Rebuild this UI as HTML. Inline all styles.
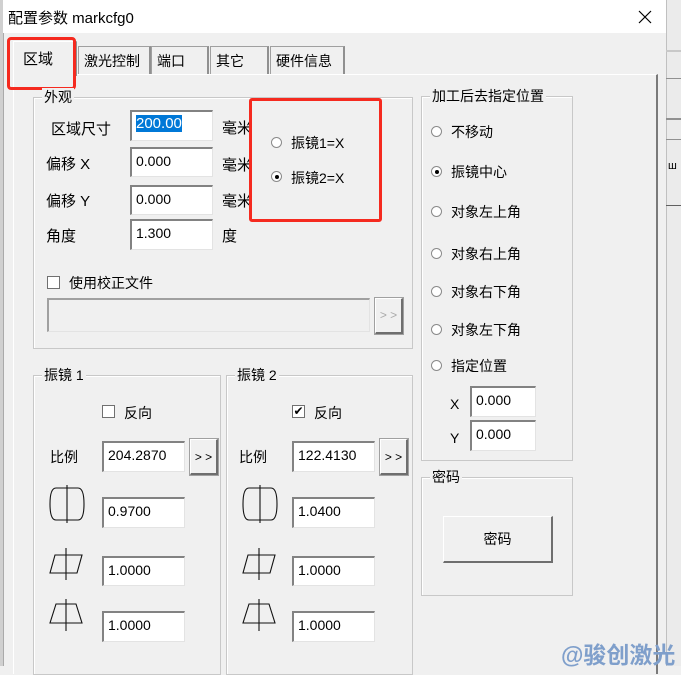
<!DOCTYPE html>
<html><head><meta charset="utf-8"><style>
*{margin:0;padding:0;box-sizing:border-box}
body{width:681px;height:666px;overflow:hidden;background:#f0f0f0;font-family:"Liberation Sans","Noto Sans CJK SC",sans-serif;font-size:14px;color:#000;position:relative}
.a{position:absolute;white-space:nowrap}
.in{position:absolute;background:#fff;border-top:2px solid #828282;border-left:2px solid #828282;border-right:1px solid #e3e3e3;border-bottom:1px solid #e3e3e3;padding:1px 0 0 4px;font-size:14px;line-height:22px}
.grp{position:absolute;border:1px solid #c8c8c8;box-shadow:inset 1px 1px 0 #fff}
.lg{position:absolute;background:#f0f0f0;padding:0 2px;top:-10px;left:8px;line-height:18px}
.btn{position:absolute;background:#f0f0f0;border:1px solid #fff;border-right:2px solid #6e6e6e;border-bottom:2px solid #6e6e6e;outline:1px solid #a0a0a0;text-align:center;font-size:12px}
.rad{position:absolute;width:11px;height:11px;border-radius:50%;border:1px solid #8a8a8a;background:#fff}
.rad.on::after{content:"";position:absolute;left:3px;top:3px;width:4px;height:4px;border-radius:50%;background:#000}
.chk{position:absolute;width:13px;height:13px;border:1px solid #707070;background:#fff;font-size:12px;line-height:11px;text-align:center}
.tab{position:absolute;top:46px;height:28px;border:1px solid #a0a0a0;border-bottom:none;border-right:2px solid #909090;padding:4px 5px;font-size:14px;background:#f0f0f0}
</style></head><body>
<div class="a" style="left:0;top:0;width:3px;height:666px;background:#d0d0d0"></div>
<div class="a" style="left:666px;top:0;width:15px;height:666px;background:#ebebeb;border-left:1px solid #c0c0c0"></div>
<div class="a" style="left:666px;top:50px;width:15px;height:2px;background:#c8c8c8"></div>
<div class="a" style="left:666px;top:78px;width:15px;height:1px;background:#909090"></div>
<div class="a" style="left:666px;top:118px;width:15px;height:2px;background:#909090"></div>
<div class="a" style="left:666px;top:139px;width:15px;height:1px;background:#909090"></div>
<div class="a" style="left:668px;top:160px;font-size:11px">ш</div>
<div class="a" style="left:666px;top:205px;width:15px;height:1px;background:#606060"></div>
<!-- dialog -->
<div class="a" style="left:3px;top:0;width:663px;height:666px;background:#f0f0f0;border-left:1px solid #aaa"></div>
<div class="a" style="left:3px;top:0;width:663px;height:33px;background:#fff"></div>
<div class="a" style="left:8px;top:7px;font-size:15px">配置参数 markcfg0</div>
<svg class="a" style="left:638px;top:10px" width="14" height="14" stroke="#000" stroke-width="1.2"><path d="M1 1L13 13M13 1L1 13"/></svg>
<!-- tab panel -->
<div class="a" style="left:13px;top:74px;width:645px;height:600px;border-top:1px solid #fff;border-left:1px solid #fff;border-right:2px solid #7a7a7a"></div>
<div class="tab" style="left:78px;width:73px">激光控制</div>
<div class="tab" style="left:151px;width:58px">端口</div>
<div class="tab" style="left:210px;width:59px">其它</div>
<div class="tab" style="left:270px;width:75px">硬件信息</div>
<div class="tab" style="left:13px;top:41px;height:35px;width:64px;border-left:1px solid #fff;border-top:1px solid #fff;padding:6px 9px;font-size:15px">区域</div>
<div class="a" style="left:7px;top:37px;width:69px;height:53px;border:3px solid #f52a1f;border-radius:4px"></div>
<!-- 外观 -->
<div class="grp" style="left:33px;top:97px;width:380px;height:252px"><div class="lg">外观</div></div>
<div class="a" style="left:51px;top:118px;font-size:15px">区域尺寸</div>
<div class="a" style="left:46px;top:153px;font-size:15px">偏移 X</div>
<div class="a" style="left:46px;top:190px;font-size:15px">偏移 Y</div>
<div class="a" style="left:46px;top:225px;font-size:15px">角度</div>
<div class="in" style="left:130px;top:110px;width:83px;height:31px;font-size:15px"><span style="background:#0078d7;color:#fff">200.00</span></div>
<div class="in" style="left:130px;top:147px;width:83px;height:30px">0.000</div>
<div class="in" style="left:130px;top:185px;width:83px;height:30px">0.000</div>
<div class="in" style="left:130px;top:219px;width:83px;height:31px">1.300</div>
<div class="a" style="left:222px;top:117px;font-size:15px">毫米</div>
<div class="a" style="left:222px;top:154px;font-size:15px">毫米</div>
<div class="a" style="left:222px;top:190px;font-size:15px">毫米</div>
<div class="a" style="left:222px;top:225px;font-size:15px">度</div>
<div class="a" style="left:249px;top:98px;width:133px;height:124px;border:3px solid #f52a1f;border-radius:3px;background:#f0f0f0"></div>
<div class="rad" style="left:271px;top:137px"></div><div class="a" style="left:291px;top:133px">振镜1=X</div>
<div class="rad on" style="left:271px;top:171px"></div><div class="a" style="left:291px;top:168px">振镜2=X</div>
<div class="chk" style="left:47px;top:276px"></div><div class="a" style="left:69px;top:273px">使用校正文件</div>
<div class="a" style="left:47px;top:298px;width:323px;height:34px;border-top:2px solid #a0a0a0;border-left:2px solid #a0a0a0;border-right:1px solid #e3e3e3;border-bottom:1px solid #e3e3e3"></div>
<div class="btn" style="left:375px;top:298px;width:28px;height:36px;line-height:32px;color:#aaa">&gt; &gt;</div>
<!-- 振镜1 -->
<div class="grp" style="left:33px;top:375px;width:188px;height:300px"><div class="lg">振镜 1</div></div>
<div class="chk" style="left:102px;top:405px"></div><div class="a" style="left:124px;top:403px">反向</div>
<div class="a" style="left:50px;top:447px">比例</div>
<div class="in" style="left:102px;top:441px;width:83px;height:31px">204.2870</div>
<div class="btn" style="left:190px;top:439px;width:28px;height:36px;line-height:34px">&gt; &gt;</div>
<div class="in" style="left:102px;top:497px;width:83px;height:31px">0.9700</div>
<div class="in" style="left:102px;top:556px;width:83px;height:30px">1.0000</div>
<div class="in" style="left:102px;top:611px;width:83px;height:31px">1.0000</div>
<!-- 振镜2 -->
<div class="grp" style="left:226px;top:375px;width:187px;height:300px"><div class="lg">振镜 2</div></div>
<div class="chk" style="left:292px;top:405px">✔</div><div class="a" style="left:314px;top:403px">反向</div>
<div class="a" style="left:239px;top:447px">比例</div>
<div class="in" style="left:292px;top:441px;width:83px;height:31px">122.4130</div>
<div class="btn" style="left:380px;top:439px;width:28px;height:36px;line-height:34px">&gt; &gt;</div>
<div class="in" style="left:292px;top:497px;width:83px;height:31px">1.0400</div>
<div class="in" style="left:292px;top:556px;width:83px;height:30px">1.0000</div>
<div class="in" style="left:292px;top:611px;width:83px;height:31px">1.0000</div>
<svg class="a" style="left:0;top:0" width="420" height="666" fill="none" stroke="#111" stroke-width="1.1">
<g id="ic"><path d="M56 488H78Q84 488 84 504Q84 520 78 520H56Q50 520 50 504Q50 488 56 488Z"/><path d="M67 485V523"/>
<path d="M55 555H82L77 573H50Z"/><path d="M66 548V580"/>
<path d="M56 604H76L82 623H50Z"/><path d="M66 599V631"/></g>
<use href="#ic" x="193"/>
</svg>
<!-- right -->
<div class="grp" style="left:421px;top:96px;width:152px;height:365px"><div class="lg">加工后去指定位置</div></div>
<div class="rad" style="left:431px;top:126px"></div><div class="a" style="left:451px;top:122px">不移动</div>
<div class="rad on" style="left:431px;top:166px"></div><div class="a" style="left:451px;top:162px">振镜中心</div>
<div class="rad" style="left:431px;top:206px"></div><div class="a" style="left:451px;top:202px">对象左上角</div>
<div class="rad" style="left:431px;top:248px"></div><div class="a" style="left:451px;top:244px">对象右上角</div>
<div class="rad" style="left:431px;top:286px"></div><div class="a" style="left:451px;top:282px">对象右下角</div>
<div class="rad" style="left:431px;top:324px"></div><div class="a" style="left:451px;top:320px">对象左下角</div>
<div class="rad" style="left:431px;top:360px"></div><div class="a" style="left:451px;top:356px">指定位置</div>
<div class="a" style="left:450px;top:396px">X</div>
<div class="a" style="left:450px;top:430px">Y</div>
<div class="in" style="left:470px;top:386px;width:66px;height:31px">0.000</div>
<div class="in" style="left:470px;top:420px;width:66px;height:31px">0.000</div>
<div class="grp" style="left:421px;top:477px;width:152px;height:119px"><div class="lg">密码</div></div>
<div class="btn" style="left:443px;top:516px;width:110px;height:47px;line-height:44px;font-size:14px;outline:none;border-color:#fff #6e6e6e #6e6e6e #fff">密码</div>
<div class="a" style="left:561px;top:636px;font-size:23px;font-weight:bold;color:#7f9fcb">@骏创激光</div>
</body></html>
